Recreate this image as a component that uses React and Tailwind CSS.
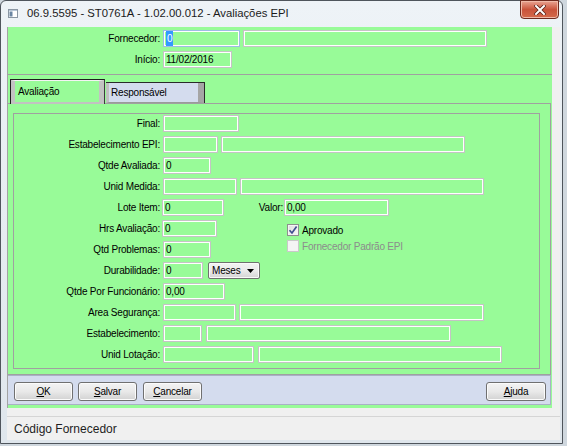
// Avaliações EPI - janela de cadastro
const font = "font-['Liberation_Sans',Arial,sans-serif]"

function Input({ className = '', children, focus }) {
  return (
    <div
      className={`h-[17px] shrink-0 flex items-center pl-[2px] border ${
        focus ? 'border-[#9dbde3]' : 'border-[#c4c4c4]'
      } shadow-[inset_0_0_0_1px_#ffffff] ${className}`}
    >
      {children}
    </div>
  )
}

function Row({ label, children, labelClass = 'w-[146px]' }) {
  return (
    <div className="flex items-center h-[17px]">
      <div className={`${labelClass} shrink-0 text-right whitespace-nowrap`}>{label}</div>
      {children}
    </div>
  )
}

function Button({ mnemonic, rest, className = '' }) {
  return (
    <div
      className={`h-[19px] w-[59px] flex items-center justify-center rounded-[3px] border border-[#707070] bg-gradient-to-b from-[#f3f3f3] via-[#e9e9e9] to-[#d2d2d2] shadow-[inset_0_0_0_1px_#fbfbfb] ${className}`}
    >
      <span>
        <span className="underline">{mnemonic}</span>
        {rest}
      </span>
    </div>
  )
}

function Check({ checked, disabled, label }) {
  return (
    <div className="flex items-center h-[12px]">
      <div
        className={`w-[12px] h-[12px] border flex items-center justify-center ${
          disabled
            ? 'border-[#c9c9c9] bg-[#f4f4f4]'
            : 'border-[#8e8f8f] bg-gradient-to-br from-[#dedede] to-[#f8f8f8] shadow-[inset_0_0_0_1px_#f4f4f4]'
        }`}
      >
        {checked && (
          <svg width="10" height="10" viewBox="0 0 10 10">
            <path d="M1.5 5.2 L4 8 L8.6 1.6" fill="none" stroke="#3f4f8f" strokeWidth="1.7" />
          </svg>
        )}
      </div>
      <span className={`ml-[3px] ${disabled ? 'text-[#8c8c8c]' : 'text-black'}`}>{label}</span>
    </div>
  )
}

export default function App() {
  return (
    <div className={`w-[567px] h-[446px] bg-[#cfd7de] overflow-hidden ${font} text-[10px] tracking-[-0.2px] text-black`}>
      <div className="w-[563px] h-[444px] border border-[#4f555c] rounded-t-[6px] bg-gradient-to-b from-[#eef3f7] to-[#dfe6ec] flex flex-col">
        {/* Title bar */}
        <div className="h-[26px] shrink-0 flex">
          <svg className="ml-[7px] mt-[8px]" width="10" height="9" viewBox="0 0 10 9">
            <rect x="0.5" y="0.5" width="9" height="8" fill="#ffffff" stroke="#8a96a3" />
            <rect x="1.5" y="2.5" width="3" height="5" fill="#6b86a3" />
            <rect x="1" y="1" width="8" height="1" fill="#b7c6d6" />
          </svg>
          <div className="ml-[9px] mt-[5px] text-[11.3px] tracking-normal leading-[15px] text-[#1b1b1b]">
            06.9.5595 - ST0761A - 1.02.00.012 - Avaliações EPI
          </div>
          <div className="ml-auto mr-[3px] -mt-[1px] w-[39px] h-[19px] rounded-b-[4px] border border-[#6e2a1f] bg-gradient-to-b from-[#e9a493] via-[#c9533b] to-[#d46a4b] shadow-[inset_0_0_0_1px_#f0b9a8] flex items-center justify-center">
            <svg width="12" height="10" viewBox="0 0 12 10">
              <path d="M2 1 L10 9 M10 1 L2 9" stroke="#5a2218" strokeWidth="3.6" strokeLinecap="square" />
              <path d="M2 1 L10 9 M10 1 L2 9" stroke="#ffffff" strokeWidth="2" strokeLinecap="square" />
            </svg>
          </div>
        </div>

        {/* Client area */}
        <div className="flex-1 ml-[6px] mr-[2px] mb-[3px] bg-[#f0f0f0] flex flex-col">
          <div className="h-[381px] w-[545px] shrink-0 bg-[#98fb98] border-l border-[#a3a3a3] flex flex-col">
            {/* Header */}
            <div className="h-[48px] shrink-0 border-b border-[#a0a0a0] pt-[3px] flex flex-col gap-[4px]">
              <Row label="Fornecedor:" labelClass="w-[152px]">
                <Input focus className="ml-[3px] w-[77px]">
                  <span className="bg-[#3399ff] text-white px-[1px]">0</span>
                </Input>
                <Input className="ml-[3px] w-[244px]" />
              </Row>
              <Row label="Início:" labelClass="w-[152px]">
                <Input className="ml-[3px] w-[69px]">11/02/2016</Input>
              </Row>
            </div>

            {/* Tabs */}
            <div className="h-[28px] shrink-0 flex items-end">
              <div className="ml-[2px] w-[95px] h-[25px] -mb-[1px] relative z-10 border-t border-l border-r border-[#1e1e1e] border-r-[#3c3c3c] bg-[#98fb98] flex">
                <div className="flex-1 flex items-center pl-[3px] border-l-[4px] border-r-[5px] border-b-[2px] border-t border-[#c2c2c2] border-t-[#f4f4f4]">
                  Avaliação
                </div>
              </div>
              <div className="ml-[1px] w-[99px] h-[21px] border-t border-r border-[#2a2a2a] bg-[#d4dcee] flex">
                <div className="flex-1 flex items-center pl-[2px] border-l-[3px] border-r-[6px] border-[#c0c0c0] border-r-[#a5a5a5] border-b border-b-[#9a9a9a]">
                  Responsável
                </div>
              </div>
            </div>

            {/* Tab panel */}
            <div className="h-[272px] w-[543px] shrink-0 border-t border-r border-b border-[#a0a0a0] pl-[5px] pt-[9px]">
              <div className="w-[527px] h-[256px] border border-[#a0a0a0] pt-[1px] flex flex-col gap-[4px]">
                <Row label="Final:">
                  <Input className="ml-[3px] w-[76px]" />
                </Row>
                <Row label="Estabelecimento EPI:">
                  <Input className="ml-[3px] w-[55px]" />
                  <Input className="ml-[3px] w-[244px]" />
                </Row>
                <Row label="Qtde Avaliada:">
                  <Input className="ml-[3px] w-[48px]">0</Input>
                </Row>
                <Row label="Unid Medida:">
                  <Input className="ml-[3px] w-[74px]" />
                  <Input className="ml-[3px] w-[244px]" />
                </Row>
                <Row label="Lote Item:">
                  <Input className="ml-[2px] w-[62px]">0</Input>
                  <div className="w-[59px] shrink-0 text-right">Valor:</div>
                  <Input className="ml-[1px] w-[105px]">0,00</Input>
                </Row>

                <div className="flex">
                  <div className="w-[273px] shrink-0 flex flex-col gap-[4px]">
                    <Row label="Hrs Avaliação:">
                      <Input className="ml-[2px] w-[55px]">0</Input>
                    </Row>
                    <Row label="Qtd Problemas:">
                      <Input className="ml-[3px] w-[48px]">0</Input>
                    </Row>
                  </div>
                  <div className="pt-[4px] flex flex-col gap-[4px]">
                    <Check checked label="Aprovado" />
                    <Check disabled label="Fornecedor Padrão EPI" />
                  </div>
                </div>

                <Row label="Durabilidade:">
                  <Input className="ml-[3px] w-[40px]">0</Input>
                  <div className="ml-[5px] w-[52px] h-[17px] rounded-[2px] border border-[#707070] bg-gradient-to-b from-[#f2f2f2] via-[#ebebeb] to-[#d4d4d4] shadow-[inset_0_0_0_1px_#fafafa] flex items-center pl-[3px]">
                    <span className="flex-1">Meses</span>
                    <svg className="mr-[5px]" width="7" height="4" viewBox="0 0 7 4">
                      <path d="M0 0 H7 L3.5 4 Z" fill="#000000" />
                    </svg>
                  </div>
                </Row>
                <Row label="Qtde Por Funcionário:">
                  <Input className="ml-[3px] w-[62px]">0,00</Input>
                </Row>
                <Row label="Area Segurança:">
                  <Input className="ml-[3px] w-[73px]" />
                  <Input className="ml-[3px] w-[245px]" />
                </Row>
                <Row label="Estabelecimento:">
                  <Input className="ml-[3px] w-[39px]" />
                  <Input className="ml-[4px] w-[245px]" />
                </Row>
                <Row label="Unid Lotação:">
                  <Input className="ml-[3px] w-[91px]" />
                  <Input className="ml-[4px] w-[244px]" />
                </Row>
              </div>
            </div>

            {/* Button bar */}
            <div className="h-[30px] w-[543px] shrink-0 bg-[#d4dcee] border-t border-b border-r border-[#a9b1c6] pt-[6px] pl-[6px] flex items-start">
              <Button mnemonic="O" rest="K" />
              <Button mnemonic="S" rest="alvar" className="ml-[5px]" />
              <Button mnemonic="C" rest="ancelar" className="ml-[6px]" />
              <Button mnemonic="A" rest="juda" className="ml-auto mr-[4px] w-[60px]" />
            </div>
          </div>

          <div className="h-[8px] shrink-0" />

          {/* Status bar */}
          <div className="flex-1 border-t border-[#d5d5d5] flex items-center pl-[7px] text-[12px] tracking-normal text-[#1e1e1e]">
            Código Fornecedor
          </div>
        </div>
      </div>
    </div>
  )
}
